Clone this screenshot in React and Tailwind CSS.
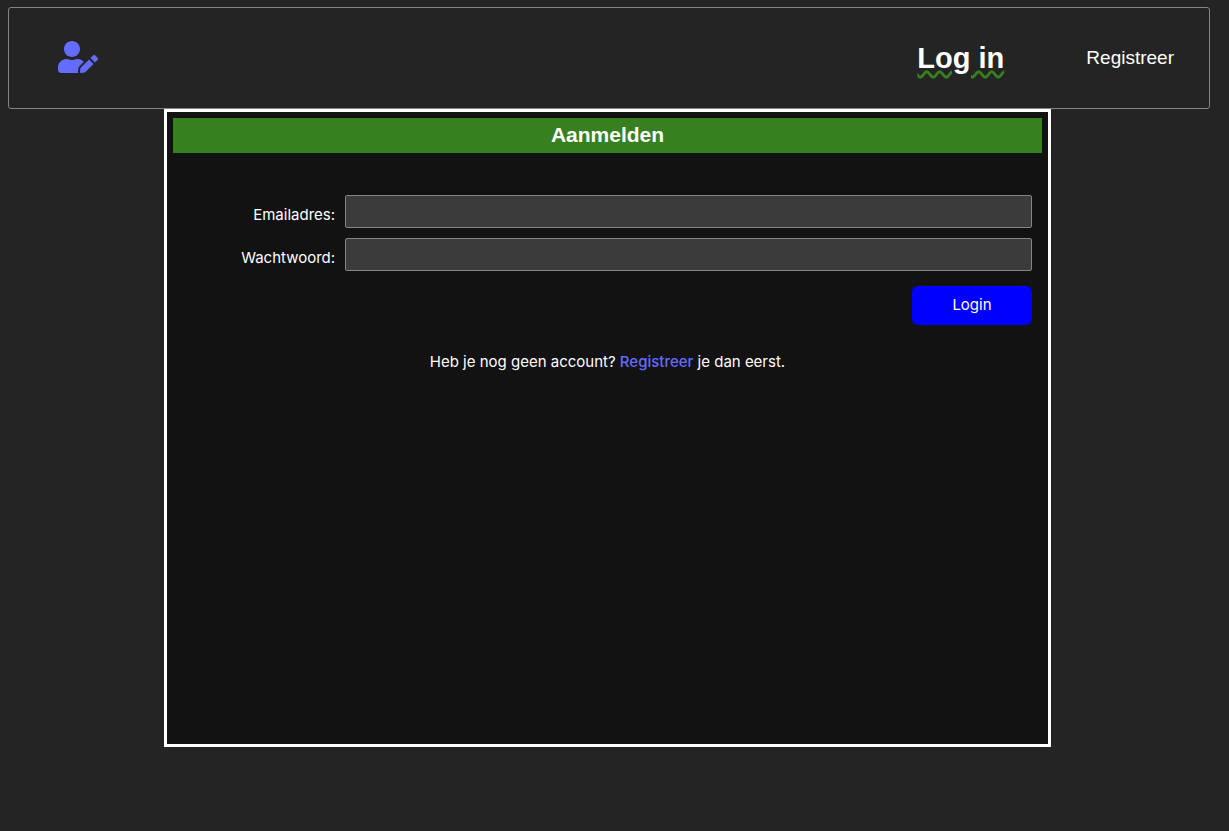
import { FaUserEdit } from "react-icons/fa";

function Field({ id, label, type }) {
  return (
    <>
      <label htmlFor={id} className="pt-2 text-right">
        {label}
      </label>
      <input
        id={id}
        type={type}
        className="h-[33px] w-full rounded-xs border border-[#858585] bg-[#3b3b3b] px-2 text-white outline-none"
      />
    </>
  );
}

export default function App() {
  return (
    <div className="min-h-screen bg-[#242424] pt-[7px] pr-3.5 text-[15px] leading-6 text-white font-['Inter',sans-serif]">
      <header className="mr-[5px] ml-2 flex h-[102px] items-center justify-between rounded-[3px] border border-[#858585] pr-[35px] pl-[49px] font-['Liberation_Sans',Arial,sans-serif]">
        <a href="#profiel" aria-label="Profiel" className="pb-0.5 text-[#646cff]">
          <FaUserEdit className="h-8 w-10" />
        </a>
        <nav className="flex items-center gap-[82px]">
          <a
            href="#login"
            className="text-[29px] font-bold underline decoration-[#368020] decoration-wavy"
          >
            Log in
          </a>
          <a href="#registreer" className="text-[19px]">
            Registreer
          </a>
        </nav>
      </header>

      <main className="mx-auto min-h-[638px] w-[73%] border-[3px] border-white bg-[#121212] p-1.5">
        <h1 className="bg-[#368020] pb-0.5 text-center text-[21px] leading-[33px] font-bold font-['Liberation_Sans',Arial,sans-serif]">
          Aanmelden
        </h1>
        <form
          className="mt-[42px] grid grid-cols-[162px_1fr] gap-2.5 pr-2.5"
          onSubmit={(event) => event.preventDefault()}
        >
          <Field id="email" label="Emailadres:" type="email" />
          <Field id="password" label="Wachtwoord:" type="password" />
          <button
            type="submit"
            className="col-start-2 mt-[5px] h-[39px] w-[120px] justify-self-end rounded-md bg-[#0000ff] pb-0.5"
          >
            Login
          </button>
        </form>
        <p className="mt-[25px] text-center">
          Heb je nog geen account?{" "}
          <a href="#registreer" className="font-medium text-[#646cff]">
            Registreer
          </a>{" "}
          je dan eerst.
        </p>
      </main>
    </div>
  );
}
